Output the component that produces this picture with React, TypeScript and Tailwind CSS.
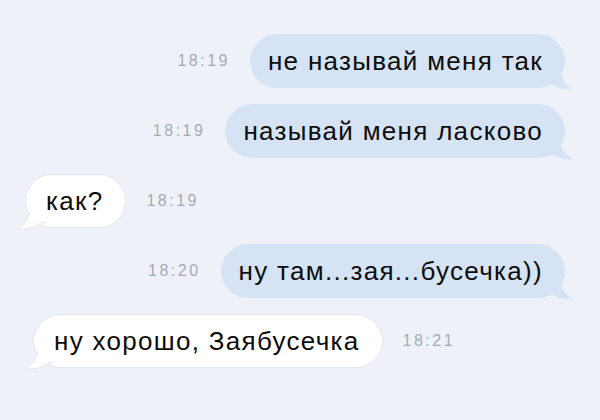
import React from "react";

const font = { fontFamily: '"Liberation Sans", Arial, sans-serif' };

function Time({ t }: { t: string }) {
  return (
    <span className="text-[16px] tracking-[2.5px] text-[#a4abb5]" style={font}>
      {t}
    </span>
  );
}

function BlueBubble({ text }: { text: string }) {
  return (
    <div className="relative">
      <div
        className="relative z-10 h-[54px] flex items-center rounded-[27px] bg-[#d5e3f5] pl-[18px] pr-[22px] text-[26px] tracking-[1.3px] text-[#0d0d0d]"
        style={font}
      >
        {text}
      </div>
      <svg
        className="absolute right-[-9px] bottom-[-2px] z-0"
        width="30"
        height="30"
        viewBox="0 0 30 30"
      >
        <path d="M0 2 L14 2 C16 16 20 24 29 29 C20 30 11 27 5 23 L0 22 Z" fill="#d5e3f5" />
      </svg>
    </div>
  );
}

function WhiteBubble({ text }: { text: string }) {
  return (
    <div className="relative">
      <div
        className="relative z-10 h-[54px] flex items-center rounded-[27px] bg-white border border-[#e2e7ee] pl-[20px] pr-[22px] text-[26px] tracking-[1.3px] text-[#0d0d0d]"
        style={font}
      >
        {text}
      </div>
      <svg
        className="absolute left-[-9px] bottom-[-2px] z-20"
        width="30"
        height="30"
        viewBox="0 0 30 30"
      >
        <path
          d="M30 2 L16 2 C14 16 10 24 1 29 C10 30 19 27 25 23 L30 22"
          fill="#ffffff"
          stroke="#e2e7ee"
          strokeWidth="1"
        />
        <rect x="14" y="0" width="16" height="22" fill="#ffffff" />
      </svg>
    </div>
  );
}

export default function App() {
  return (
    <div className="w-[600px] h-[420px] bg-[#eef2f8] overflow-hidden flex flex-col pt-[34px] gap-[16px]">
      <div className="flex items-center justify-end gap-[20px] pr-[35px]">
        <Time t="18:19" />
        <BlueBubble text="не называй меня так" />
      </div>
      <div className="flex items-center justify-end gap-[20px] pr-[35px]">
        <Time t="18:19" />
        <BlueBubble text="называй меня ласково" />
      </div>
      <div className="flex items-center justify-start gap-[20px] pl-[25px]">
        <WhiteBubble text="как?" />
        <Time t="18:19" />
      </div>
      <div className="flex items-center justify-end gap-[20px] pr-[35px]">
        <Time t="18:20" />
        <BlueBubble text="ну там...зая...бусечка))" />
      </div>
      <div className="flex items-center justify-start gap-[20px] pl-[33px]">
        <WhiteBubble text="ну хорошо, Заябусечка" />
        <Time t="18:21" />
      </div>
    </div>
  );
}
